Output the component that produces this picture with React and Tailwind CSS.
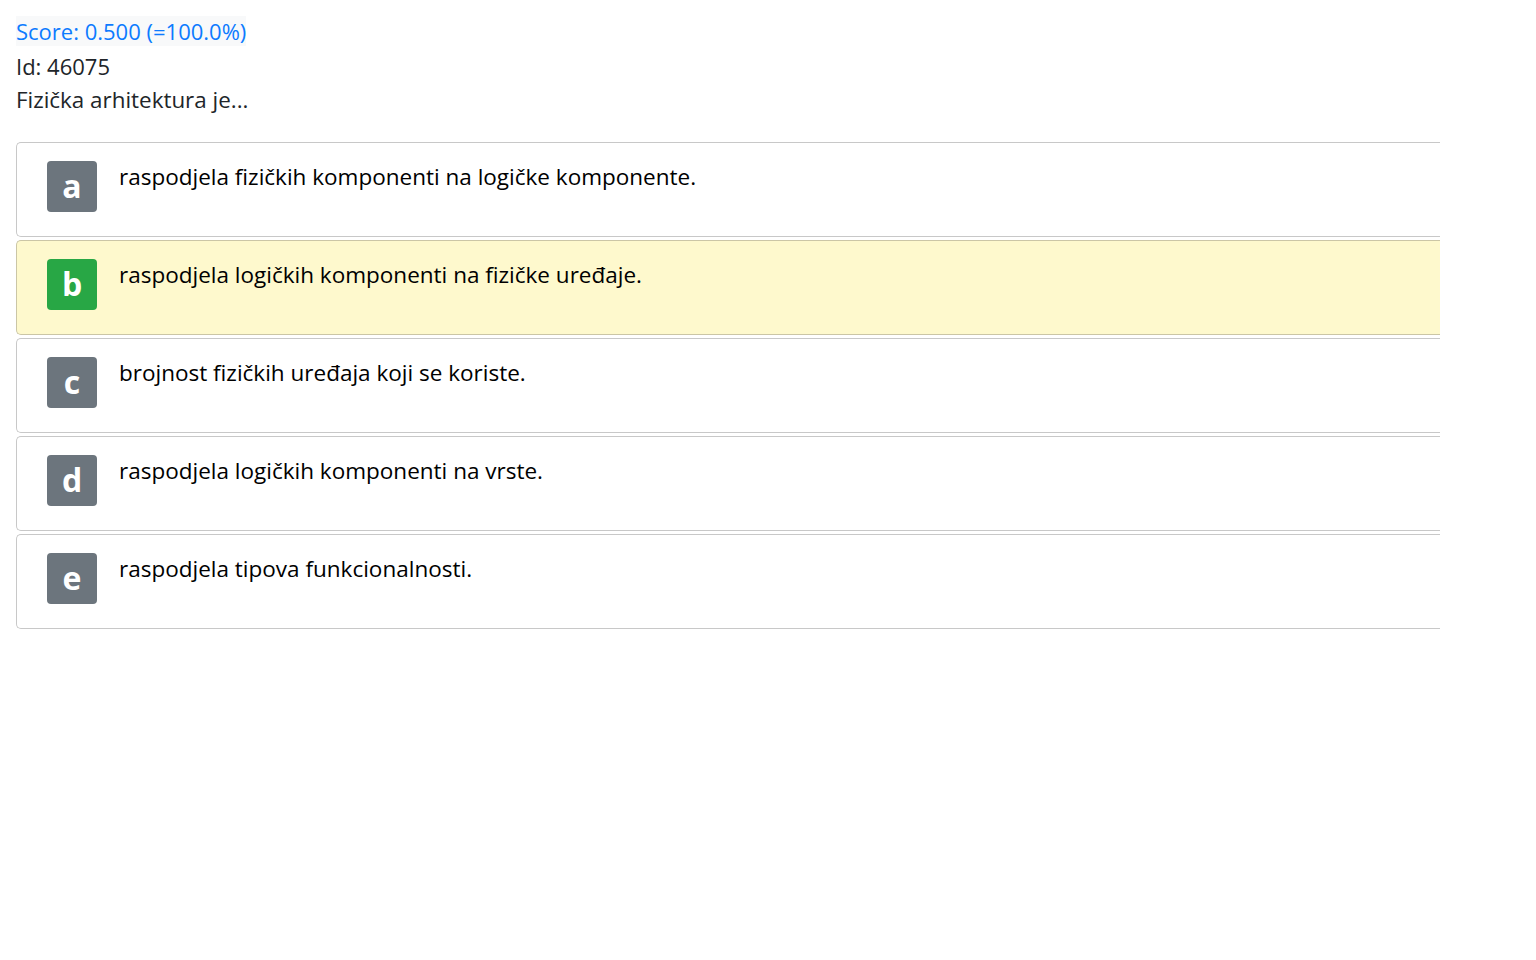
import React from "react";

const answers = [
  { letter: "a", text: "raspodjela fizičkih komponenti na logičke komponente." },
  { letter: "b", text: "raspodjela logičkih komponenti na fizičke uređaje.", correct: true },
  { letter: "c", text: "brojnost fizičkih uređaja koji se koriste." },
  { letter: "d", text: "raspodjela logičkih komponenti na vrste." },
  { letter: "e", text: "raspodjela tipova funkcionalnosti." },
];

const App = () => {
  return (
    <div
      className="min-h-screen bg-white px-4 pt-[14px] text-[22px] leading-[34.5px] text-[#212529]"
      style={{ fontFamily: '"Open Sans", "Noto Sans", sans-serif' }}
    >
      {/* Header */}
      <div>
        <span className="bg-[#f8f9fa] text-[#0d7bff]">Score: 0.500 (=100.0%)</span>
      </div>
      <div>Id: 46075</div>
      <div className="text-[22.4px]">Fizička arhitektura je...</div>

      {/* Answers */}
      <div className="mt-[24px] w-[1424px] flex flex-col gap-[3px]">
        {answers.map((a) => (
          <div
            key={a.letter}
            className={
              a.correct
                ? "h-[95px] flex items-start gap-[22px] pl-[30px] pt-[18px] border border-r-0 border-[#cbc6a6] rounded-l-[5px] bg-[#fef9cd]"
                : "h-[95px] flex items-start gap-[22px] pl-[30px] pt-[18px] border border-r-0 border-[#c8c8c8] rounded-l-[5px] bg-white"
            }
          >
            <div
              className={
                a.correct
                  ? "w-[50px] h-[51px] shrink-0 rounded-[4px] bg-[#28a745] text-white font-bold text-[32px] flex items-center justify-center"
                  : "w-[50px] h-[51px] shrink-0 rounded-[4px] bg-[#6c757d] text-white font-bold text-[32px] flex items-center justify-center"
              }
            >
              {a.letter}
            </div>
            <div className="text-black text-[22.5px] leading-[32px]">{a.text}</div>
          </div>
        ))}
      </div>
    </div>
  );
};

export default App;
